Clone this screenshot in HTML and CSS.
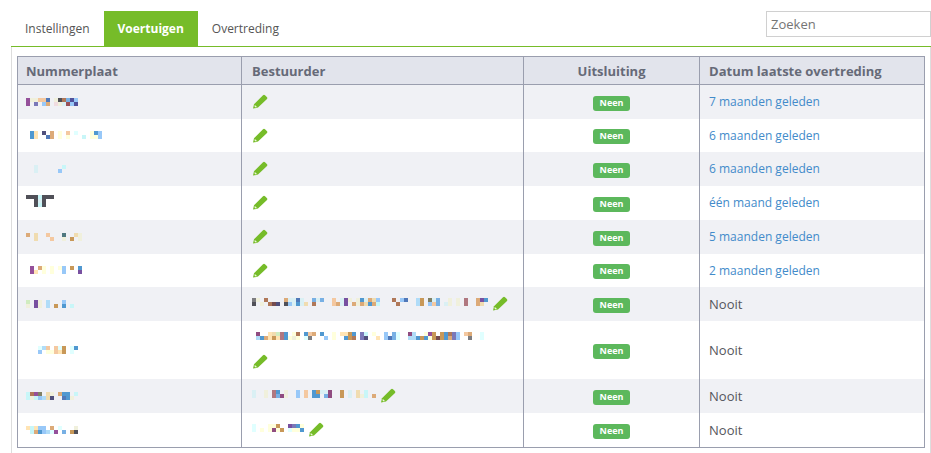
FILE: index.html
```
<!DOCTYPE html>
<html lang="nl">
<head>
  <meta charset="UTF-8" />
  <meta name="viewport" content="width=device-width, initial-scale=1" />
  <title>Voertuigen</title>
  <link rel="stylesheet" href="styles.css">
</head>
<body>
  <header class="topbar">
    <nav class="tabs">
      <a href="#instellingen">Instellingen</a>
      <a href="#voertuigen" class="active">Voertuigen</a>
      <a href="#overtreding">Overtreding</a>
    </nav>
    <input type="text" class="search" name="zoeken" placeholder="Zoeken" aria-label="Zoeken" />
  </header>

  <main class="panel">
    <table class="vehicles">
      <colgroup>
        <col class="col-plate">
        <col class="col-driver">
        <col class="col-excluded">
        <col class="col-date">
      </colgroup>
      <thead>
        <tr>
          <th>Nummerplaat</th>
          <th>Bestuurder</th>
          <th class="center">Uitsluiting</th>
          <th>Datum laatste overtreding</th>
        </tr>
      </thead>
      <tbody id="rows"></tbody>
    </table>
  </main>

  <script>
    // Afgeschermde gegevens: elke letter is een blokje, een punt is leeg
    const kleuren = {
      P: '#95509a', v: '#7b78b8', V: '#7850a0', i: '#50509a', k: '#505058',
      K: '#50507c', b: '#5078b8', B: '#5098d0', s: '#78b0e4', l: '#98c8f8',
      L: '#b0dcf8', a: '#e0ffff', A: '#c8f6f8', f: '#daf0f4', t: '#dcaa78',
      T: '#c89858', o: '#f4c8a0', r: '#b07858', m: '#985058', p: '#f0dce0',
      c: '#f0f0dc', y: '#ffffdc', w: '#ffe4b4', W: '#f0dcb0', g: '#d0ecc0',
      G: '#808064', n: '#b07880', x: '#7c7c80', q: '#904c80', e: '#507880',
      d: '#744c50'
    };

    const voertuigen = [
      { plaat: ['Pccoob.ckrsil', 'P.v.lt.pcfmli'], datum: '7 maanden geleden' },
      { plaat: ['.Bw.K.t.y.o.a...yBl', '.Bw..bt.y.y...A.yyl'], datum: '6 maanden geleden' },
      { plaat: ['..f......A', '..f.....l.'], datum: '6 maanden geleden' },
      { plaat: ['kkkAkkk', '..kfk..', '..kAk..'], datum: 'één maand geleden' },
      { plaat: ['t.W..o...e..Wc', '..W...o..c.T.c'], datum: '5 maanden geleden' },
      { plaat: ['.P.ty.y.yl.T.B', '.Pw.y.y..l...V'], datum: '2 maanden geleden' },
      { plaat: ['g.Vc.L...l..', 'c.Vc.L.T.B.A'],
        bestuurder: ['xc.r....tffbf..sfs..o.fVc.cBftWl...r.lb..LT.Gfs..c.c.n..tVB',
                     'k.c.rdK.klfBfW.r....otfV.tctWBtA....r....LT.los.fc.c.n..tW.'] },
      { plaat: ['...aLo.oaT.aB', '...l.yyowT.a.'],
        bestuurder: ['.q..wWgnB.yr.Bot.B..y.wwTB.vA.y..l.sa..qL..yPT.TBrvl.ot..a',
                     '.LBtwTwnBycy.ax...l.y..BTr.vK..w.lbsa..LLBTByTdTBtvl..x..a'],
        nieuweRegel: true },
      { plaat: ['ArPG.Wc.tBB.A', 'AcAlLWK..bBc.'],
        bestuurder: ['f..c.nB.c..l.o.BTffq..T.f.W.A..', 'f..c.nsqc..l.o.BB.sq..T.f.WcA.t'] },
      { plaat: ['wAwll.t.a...c', '.AtBlLaP.s.Tk'],
        bestuurder: ['a...yyT..VvBy', 'a.y.yqyT.ayyB'] }
    ];

    const potlood = `<button type="button" class="edit" aria-label="Bewerken">
      <svg width="16" height="16" viewBox="0 0 16 16">
        <path fill="#76bc29" d="M1 14.6 L2 10.2 L11 1.2 Q12 .4 13 1.2 L14.8 3 Q15.8 4 15 5 L6 13.6 Z"/>
        <path fill="#eef7dc" d="M2.9 11 L5 12.9 L3.6 13.4 L2.4 12.3 Z"/>
      </svg></button>`;

    function mozaiek(regels) {
      const b = regels[0].length * 4;
      const h = regels.length * 4;
      let html = `<svg class="mosaic" width="${b}" height="${h}" shape-rendering="crispEdges" aria-hidden="true">`;
      regels.forEach((regel, y) => {
        [...regel].forEach((c, x) => {
          if (c !== '.') {
            html += `<rect x="${x * 4}" y="${y * 4}" width="4" height="4" fill="${kleuren[c]}"/>`;
          }
        });
      });
      return html + '</svg>';
    }

    document.getElementById('rows').innerHTML = voertuigen.map(v => `
      <tr>
        <td>${mozaiek(v.plaat)}</td>
        <td>${v.bestuurder ? mozaiek(v.bestuurder) : ''}${v.nieuweRegel ? '<br />' : ''}${potlood}</td>
        <td class="center"><span class="label">Neen</span></td>
        <td>${v.datum ? `<a href="#overtreding">${v.datum}</a>` : 'Nooit'}</td>
      </tr>`).join('');
  </script>
</body>
</html>
```
FILE: styles.css
```
* {
  box-sizing: border-box;
}
body {
  display: flex;
  flex-direction: column;
  min-height: 100vh;
  margin: 0;
  padding: 11px 0 0 11px;
  font-family: "Open Sans", sans-serif;
  font-size: 13px;
  line-height: 20px;
  color: #55555c;
  background-color: #fff;
}
.topbar {
  display: flex;
  justify-content: space-between;
  align-items: flex-start;
  border-bottom: 1px solid #76bc29;
}
.tabs {
  display: flex;
}
.tabs a {
  padding: 8px 14px 7px;
  color: #555;
  font-size: 12px;
  text-decoration: none;
}
.tabs .active {
  background-color: #76bc29;
  color: #fff;
  font-weight: bold;
}
.search {
  width: 165px;
  height: 26px;
  padding: 0 4px;
  border: 1px solid #d0d0d0;
  font: inherit;
  color: #555;
}
.search::placeholder {
  color: #757575;
}
.panel {
  flex: 1;
  padding: 9px 5px 5px;
  border: 1px solid #ddd;
  border-width: 0 1px;
}
.vehicles {
  width: 100%;
  table-layout: fixed;
  border-collapse: collapse;
  border: 1px solid #9a9eae;
}
.col-plate {
  width: 24.7%;
}
.col-driver {
  width: 31.1%;
}
.col-excluded {
  width: 19.4%;
}
.vehicles th,
.vehicles td {
  padding: 0 9px;
  border-right: 1px solid #9a9eae;
  text-align: left;
  vertical-align: middle;
}
.vehicles th {
  height: 28px;
  background-color: #e2e4ec;
  border-bottom: 1px solid #9a9eae;
  color: #666a78;
}
.vehicles td {
  height: 34px;
  padding-bottom: 2px;
  line-height: 24px;
}
.vehicles th:first-child,
.vehicles td:first-child {
  padding-left: 8px;
}
.vehicles th:nth-child(2),
.vehicles td:nth-child(2) {
  padding-left: 10px;
}
.vehicles td:last-child {
  padding-bottom: 0;
}
.vehicles tbody tr:nth-child(odd) {
  background-color: #f0f1f5;
}
.vehicles tbody tr:nth-child(4n+2) td {
  height: 33px;
}
.vehicles tbody tr:nth-child(8) td {
  height: 58px;
}
.vehicles tbody tr:last-child td {
  height: 35px;
}
.vehicles .center {
  padding-bottom: 0;
  text-align: center;
}
.vehicles a {
  color: #428bca;
  font-size: 12px;
  text-decoration: none;
}
.mosaic {
  margin-right: 4px;
  vertical-align: baseline;
}
td + td .mosaic {
  vertical-align: 2px;
}
.edit {
  padding: 0;
  border: none;
  background: none;
  line-height: 0;
  vertical-align: middle;
  cursor: pointer;
}
.label {
  display: inline-block;
  padding: 2px 7px 3px;
  border-radius: 3px;
  background-color: #5cb85c;
  color: #fff;
  font-size: 9px;
  font-weight: bold;
  line-height: 10px;
  vertical-align: middle;
}
```
